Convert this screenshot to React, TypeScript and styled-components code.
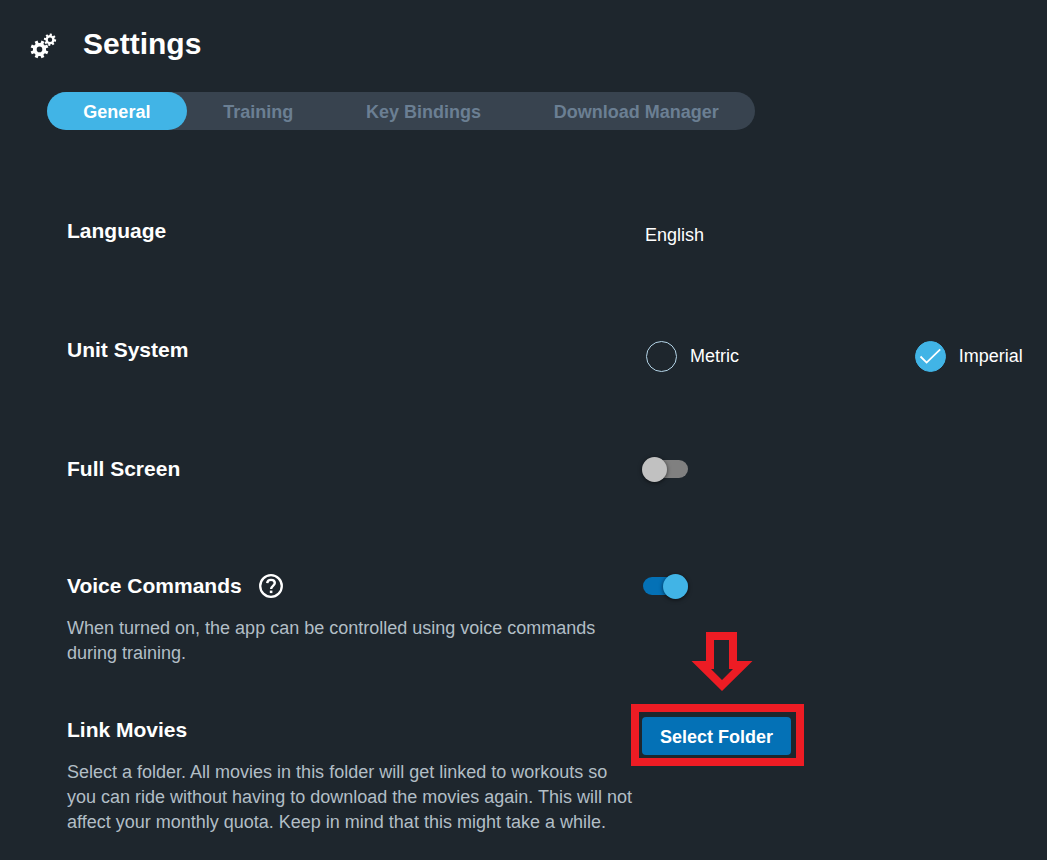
import React, { useState } from "react";
import styled, { createGlobalStyle } from "styled-components";

const GlobalStyle = createGlobalStyle`
  *, *::before, *::after { box-sizing: border-box; }
  body {
    margin: 0;
    background: #1e262d;
    color: #ffffff;
    font-family: "Liberation Sans", Arial, Helvetica, sans-serif;
    font-size: 18px;
    line-height: 25px;
  }
`;

const Page = styled.main`
  padding: 26px 0;
`;

const Header = styled.header`
  display: flex;
  align-items: center;
  gap: 26px;
  padding-left: 30px;
  margin-bottom: 30px;
`;

const GearsIcon = styled.svg`
  width: 27px;
  height: 26px;
  margin-top: 4px;
`;

const Title = styled.h1`
  margin: 0;
  font-size: 30px;
  line-height: 36px;
`;

const Tabs = styled.nav`
  display: flex;
  max-width: 708px;
  margin-left: 47px;
  border-radius: 19px;
  background: #38434f;
`;

const Tab = styled.button<{ $active: boolean }>`
  flex: 1 0 auto;
  height: 38px;
  padding: 2px 36px 0;
  border: 0;
  border-radius: 19px;
  background: ${({ $active }) => ($active ? "#41b4e6" : "transparent")};
  color: ${({ $active }) => ($active ? "#ffffff" : "#6b7f93")};
  font: bold 18px/25px "Liberation Sans", Arial, sans-serif;
  white-space: nowrap;
  cursor: pointer;
`;

const SettingsList = styled.div`
  display: flex;
  flex-direction: column;
  gap: 51px;
  margin-top: 88px;
  padding-left: 67px;
`;

const Row = styled.section<{ $compact?: boolean }>`
  display: grid;
  grid-template-columns: 575fr 405fr;
  align-items: start;
  min-height: ${({ $compact }) => ($compact ? 66 : 68)}px;
`;

const Heading = styled.h2`
  display: flex;
  align-items: center;
  gap: 17px;
  margin: 0;
  font-size: 21px;
  line-height: 25px;
`;

const Description = styled.p`
  margin: 18px 4px 0 0;
  color: #b2bec6;
`;

const HelpButton = styled.button`
  display: flex;
  padding: 0;
  border: 0;
  background: none;
  color: inherit;
  cursor: pointer;
`;

const Value = styled.div`
  padding: 5px 3px 0;
`;

const RadioGroup = styled.div`
  display: grid;
  grid-template-columns: 67% 33%;
  padding: 4px 0 0 4px;
`;

const RadioLabel = styled.label`
  display: flex;
  align-items: center;
  gap: 13px;
  cursor: pointer;
`;

const RadioInput = styled.input`
  appearance: none;
  width: 31px;
  height: 31px;
  margin: 0;
  border: 1px solid #b5d5e8;
  border-radius: 50%;
  grid-area: 1 / 1;
  cursor: pointer;

  &:checked {
    border-color: #41b4e6;
    background: #41b4e6;
  }
`;

const RadioMark = styled.span`
  display: grid;
  flex: none;

  svg {
    grid-area: 1 / 1;
    pointer-events: none;
  }
`;

const Switch = styled.input`
  appearance: none;
  display: grid;
  align-items: start;
  width: 46px;
  height: 25px;
  margin: 1px 0 0;
  cursor: pointer;

  &::before,
  &::after {
    content: "";
    grid-area: 1 / 1;
  }

  &::before {
    height: 18px;
    margin: 3px 0 0 1px;
    border-radius: 9px;
    background: #808080;
  }

  &::after {
    width: 25px;
    height: 25px;
    border-radius: 50%;
    background: #c1c1c1;
    box-shadow: 0 1px 4px rgba(0, 0, 0, 0.6);
  }

  &:checked::before {
    background: #0471b6;
  }

  &:checked::after {
    justify-self: end;
    background: #41b4e6;
  }
`;

const Highlighted = styled.div`
  position: relative;
  width: fit-content;
`;

const HighlightFrame = styled.span`
  position: absolute;
  inset: -13px -13px -11px -11px;
  border: 8px solid #ed1c24;
  pointer-events: none;
`;

const Arrow = styled.svg`
  position: absolute;
  left: 49px;
  bottom: calc(100% + 26px);
  width: 62px;
  height: 59px;
  pointer-events: none;
`;

const PrimaryButton = styled.button`
  display: block;
  height: 38px;
  padding: 2px 18px 0;
  border: 0;
  border-radius: 4px;
  background: #0471b6;
  color: #ffffff;
  font: bold 18px/25px "Liberation Sans", Arial, sans-serif;
  white-space: nowrap;
  cursor: pointer;
`;

const gearPath = (cx: number, cy: number, outer: number, inner: number, hole: number, turn: number) => {
  const teeth = 8;
  const step = (Math.PI * 2) / teeth;
  const points: string[] = [];
  for (let i = 0; i < teeth; i++) {
    const a = i * step + turn;
    const corners: [number, number][] = [
      [-0.3, inner],
      [-0.22, outer],
      [0.22, outer],
      [0.3, inner],
    ];
    corners.forEach(([k, r]) => {
      points.push(`${(cx + r * Math.cos(a + k * step)).toFixed(2)} ${(cy + r * Math.sin(a + k * step)).toFixed(2)}`);
    });
  }
  return `M${points.join("L")}ZM${cx - hole} ${cy}a${hole} ${hole} 0 1 0 ${hole * 2} 0a${hole} ${hole} 0 1 0 ${-hole * 2} 0Z`;
};

const Gears = () => (
  <GearsIcon viewBox="0 0 27 26" fill="#ffffff" fillRule="evenodd" aria-hidden="true">
    <path d={gearPath(9.5, 16.4, 9.1, 6.6, 2.8, Math.PI / 8)} />
    <path d={gearPath(20, 6.7, 6.2, 4.6, 2.2, 0.15)} />
  </GearsIcon>
);

const tabs = ["General", "Training", "Key Bindings", "Download Manager"];
const units = ["Metric", "Imperial"];

export default function App() {
  const [tab, setTab] = useState("General");
  const [unit, setUnit] = useState("Imperial");
  const [fullScreen, setFullScreen] = useState(false);
  const [voice, setVoice] = useState(true);

  return (
    <>
      <GlobalStyle />
      <Page>
        <Header>
          <Gears />
          <Title>Settings</Title>
        </Header>
        <Tabs>
          {tabs.map((name) => (
            <Tab key={name} type="button" $active={name === tab} onClick={() => setTab(name)}>
              {name}
            </Tab>
          ))}
        </Tabs>
        <SettingsList>
          <Row>
            <Heading>Language</Heading>
            <Value>English</Value>
          </Row>
          <Row>
            <Heading id="unit-system">Unit System</Heading>
            <RadioGroup role="radiogroup" aria-labelledby="unit-system">
              {units.map((name) => (
                <RadioLabel key={name}>
                  <RadioMark>
                    <RadioInput type="radio" name="unit" checked={unit === name} onChange={() => setUnit(name)} />
                    {unit === name && (
                      <svg width="31" height="31" viewBox="0 0 31 31" fill="none" stroke="#ffffff" strokeWidth="1.8">
                        <path d="M5.5 15.5L11.6 21.6L25.2 8.4" />
                      </svg>
                    )}
                  </RadioMark>
                  {name}
                </RadioLabel>
              ))}
            </RadioGroup>
          </Row>
          <Row $compact>
            <Heading>
              <label htmlFor="full-screen">Full Screen</label>
            </Heading>
            <Switch
              id="full-screen"
              type="checkbox"
              checked={fullScreen}
              onChange={(e) => setFullScreen(e.target.checked)}
            />
          </Row>
          <Row>
            <div>
              <Heading>
                <label htmlFor="voice-commands">Voice Commands</label>
                <HelpButton type="button" aria-label="Help">
                  <svg width="24" height="24" viewBox="0 0 24 24" fill="none" stroke="currentColor" aria-hidden="true">
                    <circle cx="12" cy="12" r="10.8" strokeWidth="2.3" />
                    <path d="M8.2 9.2C8.4 6.9 10 5.9 12 5.9C14.2 5.9 15.8 7.2 15.8 9.1C15.8 11.8 12.1 12 12.1 15" strokeWidth="2.4" />
                    <path d="M12.1 16.6v2.5" strokeWidth="2.6" />
                  </svg>
                </HelpButton>
              </Heading>
              <Description>
                When turned on, the app can be controlled using voice commands during training.
              </Description>
            </div>
            <Switch
              id="voice-commands"
              type="checkbox"
              checked={voice}
              onChange={(e) => setVoice(e.target.checked)}
            />
          </Row>
          <Row>
            <div>
              <Heading>Link Movies</Heading>
              <Description>
                Select a folder. All movies in this folder will get linked to workouts so you can ride without having
                to download the movies again. This will not affect your monthly quota. Keep in mind that this might
                take a while.
              </Description>
            </div>
            <Highlighted>
              <PrimaryButton type="button">Select Folder</PrimaryButton>
              <HighlightFrame />
              <Arrow viewBox="0 0 62 59" fill="#ed1c24" fillRule="evenodd" aria-hidden="true">
                <path d="M15 0H46V29H61.5L31 59L.5 29H15ZM23 8V37H20L31 48L42 37H38V8Z" />
              </Arrow>
            </Highlighted>
          </Row>
        </SettingsList>
      </Page>
    </>
  );
}
